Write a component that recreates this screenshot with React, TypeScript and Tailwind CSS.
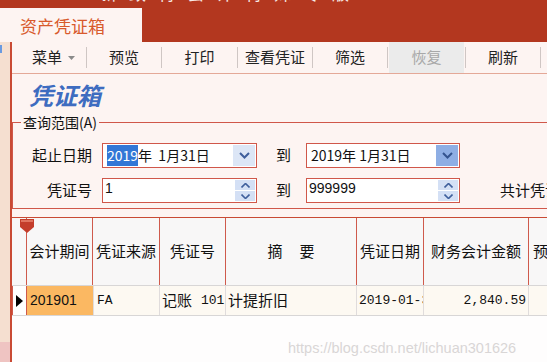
import React from 'react';

const cjk = '"Noto Sans CJK SC", "Liberation Sans", sans-serif';

function Chevron({ dark }: { dark?: boolean }) {
  return (
    <svg width="11" height="7" viewBox="0 0 11 7">
      <path d="M1 1 L5.5 5.5 L10 1" fill="none" stroke={dark ? '#34548f' : '#3f5f9c'} strokeWidth="2" />
    </svg>
  );
}

function DateBox({ value, highlight, dark }: { value: string; highlight?: boolean; dark?: boolean }) {
  return (
    <div className="flex h-[25px] items-stretch border border-[#d0574a] bg-white">
      <div className="flex flex-1 items-center pl-[4px] text-[14px] text-[#111]" style={{ fontFamily: cjk }}>
        {highlight ? (
          <>
            <span className="bg-[#3277d6] text-white">2019</span>
            <span>年&nbsp;&nbsp;1月31日</span>
          </>
        ) : (
          <span>{value}</span>
        )}
      </div>
      <div
        className={`my-[1px] mr-[1px] flex w-[22px] items-center justify-center ${
          dark ? 'bg-[#8eaee4]' : 'bg-[#dce6f6]'
        }`}
      >
        <Chevron dark={dark} />
      </div>
    </div>
  );
}

function SpinBox({ value }: { value: string }) {
  return (
    <div className="flex h-[25px] items-stretch border border-[#d0574a] bg-white">
      <div className="flex-1 pl-[2px] pt-[1px] text-[14px] leading-[16px] text-[#111]" style={{ fontFamily: '"Liberation Sans", sans-serif' }}>
        {value}
      </div>
      <div className="my-[1px] mr-[1px] flex w-[20px] flex-col gap-[1px]">
        <div className="flex flex-1 items-center justify-center bg-[#d4e0f5]">
          <svg width="9" height="5" viewBox="0 0 9 5">
            <path d="M0.5 4.5 L4.5 0.5 L8.5 4.5" fill="none" stroke="#3f5f9c" strokeWidth="1.6" />
          </svg>
        </div>
        <div className="flex flex-1 items-center justify-center bg-[#d4e0f5]">
          <svg width="9" height="5" viewBox="0 0 9 5">
            <path d="M0.5 0.5 L4.5 4.5 L8.5 0.5" fill="none" stroke="#3f5f9c" strokeWidth="1.6" />
          </svg>
        </div>
      </div>
    </div>
  );
}

const toolItems = [
  { label: '预览', w: 'w-[74px]' },
  { label: '打印', w: 'w-[75px]' },
  { label: '查看凭证', w: 'w-[74px]' },
  { label: '筛选', w: 'w-[74px]' },
  { label: '恢复', w: 'w-[75px]', disabled: true },
  { label: '刷新', w: 'w-[74px]' },
];

const columns = [
  { title: '会计期间', w: 'w-[66px]' },
  { title: '凭证来源', w: 'w-[67px]' },
  { title: '凭证号', w: 'w-[66px]' },
  { title: '摘\u00a0\u00a0\u00a0\u00a0\u00a0要', w: 'w-[131px]' },
  { title: '凭证日期', w: 'w-[67px]' },
  { title: '财务会计金额', w: 'w-[105px]' },
];

export default function App() {
  return (
    <div className="relative flex h-[362px] w-[547px] flex-col overflow-hidden bg-[#fdf4f2]" style={{ fontFamily: cjk }}>
      {/* window caption + tab */}
      <div className="flex h-[42px] shrink-0 flex-col bg-[#b3371f]">
        <div className="h-[8px] overflow-hidden pl-[100px]">
          <div className="-mt-[20px] whitespace-nowrap text-[17px] tracking-[12px] text-white/90">新致特会计特殊专版</div>
        </div>
        <div className="flex h-[34px] w-[142px] items-center bg-[#fdf4f2] pl-[20px] pt-[1px] text-[17px] text-[#d85a2c]">
          资产凭证箱
        </div>
      </div>

      <div className="flex min-h-0 flex-1">
        {/* left dock strip */}
        <div className="flex w-[10px] shrink-0 flex-col bg-[#f5dfd0]">
          <div className="ml-0 mt-[3px] h-[8px] w-[2px] bg-[#6a9ae0]" />
          <div className="flex-1" />
          <div className="h-[20px] bg-[#efc4c2]" />
        </div>

        <div className="flex min-w-0 flex-1 flex-col border-l-2 border-[#c94a34]">
          {/* toolbar */}
          <div className="flex h-[32px] shrink-0 items-stretch border-b border-[#e4a898] text-[15px] text-[#222]">
            <div className="flex w-[74px] items-center pl-[20px]">
              <span>菜单</span>
              <svg className="ml-[6px]" width="7" height="4" viewBox="0 0 7 4">
                <path d="M0 0 H7 L3.5 4 Z" fill="#8a8a8a" />
              </svg>
            </div>
            {toolItems.map((t) => (
              <React.Fragment key={t.label}>
                <div className="my-[5px] w-px bg-[#cfc6c4]" />
                <div className={`flex ${t.w} items-center justify-center ${t.disabled ? 'mx-[1px] bg-[#ebebeb] text-[#a8a8a8]' : ''}`}>
                  {t.label}
                </div>
              </React.Fragment>
            ))}
            <div className="my-[5px] w-px bg-[#cfc6c4]" />
          </div>

          {/* title */}
          <div className="flex h-[40px] shrink-0 items-center pl-[17px] pt-[1px]">
            <span className="text-[24px] font-bold italic text-[#3e6cc0]" style={{ fontFamily: '"Noto Sans CJK SC", serif' }}>
              凭证箱
            </span>
          </div>

          {/* query range group */}
          <fieldset className="shrink-0 border border-r-0 border-[#d0574a] pb-[5px]">
            <legend className="ml-[8px] px-[2px] text-[14px] leading-[16px] text-[#111]">查询范围(A)</legend>
            <div className="mt-[13px] flex items-center text-[15px] text-[#111]">
              <span className="w-[79px] text-right">起止日期</span>
              <div className="ml-[10px] w-[155px]">
                <DateBox value="" highlight />
              </div>
              <span className="ml-[19px]">到</span>
              <div className="ml-[15px] w-[154px]">
                <DateBox value="2019年  1月31日" dark />
              </div>
            </div>
            <div className="mt-[10px] flex items-center text-[15px] text-[#111]">
              <span className="w-[79px] text-right">凭证号</span>
              <div className="ml-[10px] w-[155px]">
                <SpinBox value="1" />
              </div>
              <span className="ml-[19px]">到</span>
              <div className="ml-[15px] w-[154px]">
                <SpinBox value="999999" />
              </div>
              <span className="ml-[40px] whitespace-nowrap">共计凭证</span>
            </div>
          </fieldset>

          {/* grid */}
          <div className="mt-[8px] flex min-h-0 flex-1 flex-col border-t border-[#c94a34] bg-[#fefdfd]">
            <div className="flex h-[67px] shrink-0 bg-[#f8f7f7] text-[15px] text-[#111]">
              <div className="relative w-[15px] shrink-0 border-r border-[#cf5a4c]">
                <svg className="absolute left-[8px] top-[1px]" width="14" height="14" viewBox="0 0 14 14">
                  <path d="M0 0 H14 V8 L7 14 L0 8 Z" fill="#c43d2b" />
                  <path d="M1 1 H13 V3 H1 Z" fill="#e0735f" />
                </svg>
              </div>
              {columns.map((c) => (
                <div key={c.title} className={`flex ${c.w} shrink-0 items-center justify-center whitespace-nowrap border-r border-[#cf5a4c]`}>
                  {c.title}
                </div>
              ))}
              <div className="flex flex-1 items-center pl-[4px] whitespace-nowrap">预计</div>
            </div>
            <div className="flex h-[31px] shrink-0 border-y border-[#d8d6d6] bg-[#fdf9f2] text-[13px] text-[#111]">
              <div className="flex w-[15px] shrink-0 items-center justify-center border-x border-[#cf5a4c] bg-white">
                <svg width="7" height="12" viewBox="0 0 7 12">
                  <path d="M0 0 L7 6 L0 12 Z" fill="#000" />
                </svg>
              </div>
              <div className="flex w-[66px] shrink-0 items-center bg-[#fbb862] pl-[3px]" style={{ fontFamily: '"Liberation Sans", sans-serif' }}>
                <span className="text-[14px]">201901</span>
              </div>
              <div className="flex w-[67px] shrink-0 items-center border-x border-[#e0dcdc] pl-[3px]" style={{ fontFamily: '"Liberation Mono", monospace' }}>
                FA
              </div>
              <div className="flex w-[66px] shrink-0 items-center whitespace-nowrap border-r border-[#e0dcdc] pl-[2px]">
                <span className="text-[15px]">记账</span>
                <span className="ml-[9px]" style={{ fontFamily: '"Liberation Mono", monospace' }}>101</span>
              </div>
              <div className="flex w-[131px] shrink-0 items-center border-r border-[#e0dcdc] pl-[2px] text-[15px]">计提折旧</div>
              <div className="flex w-[67px] shrink-0 items-center overflow-hidden whitespace-nowrap border-r border-[#e0dcdc] pl-[2px]" style={{ fontFamily: '"Liberation Mono", monospace' }}>
                2019-01-31
              </div>
              <div className="flex w-[105px] shrink-0 items-center justify-end border-r border-[#e0dcdc] pr-[2px]" style={{ fontFamily: '"Liberation Mono", monospace' }}>
                2,840.59
              </div>
              <div className="flex-1" />
            </div>
          </div>
        </div>
      </div>

      {/* watermark */}
      <div className="pointer-events-none absolute left-[288px] top-[338px] whitespace-nowrap text-[14.5px] text-[#d9d6d6]" style={{ fontFamily: '"Liberation Sans", sans-serif' }}>
        https://blog.csdn.net/lichuan301626
      </div>
    </div>
  );
}
